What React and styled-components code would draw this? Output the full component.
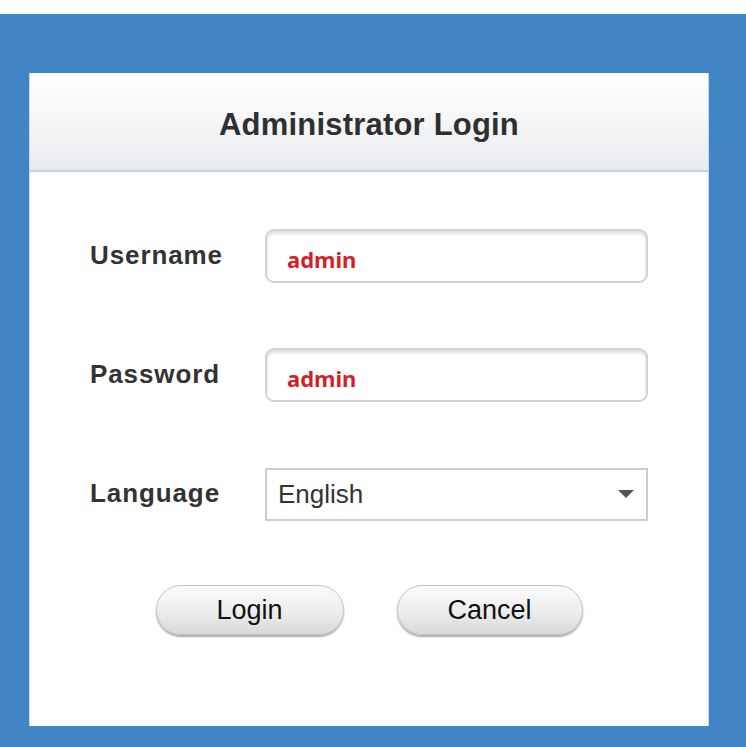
import React from "react";
import styled, { createGlobalStyle } from "styled-components";

const Global = createGlobalStyle`
  html, body { margin: 0; padding: 0; }
  body { background: #4185c5; font-family: "Liberation Sans", Arial, sans-serif; }
`;

const Page = styled.div`
  min-height: 747px;
  display: flex;
  flex-direction: column;
`;

const TopBand = styled.div`
  height: 14px;
  background: #fbfefd;
`;

const Stage = styled.div`
  flex: 1;
  background: #4185c5;
  padding: 59px 0 21px 29px;
`;

const Card = styled.div`
  width: 678px;
  height: 653px;
  background: #fff;
  border-left: 1px solid #c6d9ee;
  border-right: 1px solid #c6d9ee;
  display: flex;
  flex-direction: column;
`;

const Header = styled.div`
  box-sizing: border-box;
  height: 99px;
  padding-top: 6px;
  border-bottom: 2px solid #c9d0d6;
  background: linear-gradient(#ffffff 0%, #f6f7f8 45%, #e8ebee 100%);
  display: flex;
  align-items: center;
  justify-content: center;
`;

const Title = styled.h1`
  margin: 0;
  font-size: 31px;
  font-weight: bold;
  color: #2f2f2f;
  letter-spacing: 0.2px;
`;

const Form = styled.div`
  display: grid;
  grid-template-columns: 175px 383px;
  grid-auto-rows: 54px;
  row-gap: 65px;
  align-items: center;
  padding: 57px 0 0 60px;
`;

const Label = styled.label`
  font-size: 26px;
  font-weight: bold;
  color: #333;
  letter-spacing: 0.9px;
  margin-top: -2px;
`;

const TextBox = styled.div`
  box-sizing: border-box;
  height: 54px;
  border: 2px solid #d2d2d2;
  border-radius: 9px;
  box-shadow: inset 0 3px 3px rgba(0, 0, 0, 0.12);
  display: flex;
  align-items: center;
  padding: 6px 0 0 20px;
  font-family: "Noto Sans", "Open Sans", sans-serif;
  font-weight: bold;
  font-size: 22px;
  color: #d61f26;
`;

const Select = styled.div`
  box-sizing: border-box;
  height: 53px;
  border: 2px solid #cccccc;
  display: flex;
  align-items: center;
  justify-content: space-between;
  padding: 0 12px 0 11px;
  font-size: 26px;
  color: #333;
`;

const Caret = styled.span`
  width: 0;
  height: 0;
  border-left: 8px solid transparent;
  border-right: 8px solid transparent;
  border-top: 8px solid #555;
`;

const Buttons = styled.div`
  display: flex;
  justify-content: center;
  gap: 53px;
  margin-top: 64px;
`;

const Button = styled.button`
  box-sizing: border-box;
  width: ${(p) => p.$w}px;
  height: 50px;
  border-radius: 25px;
  border: 1px solid #c4c4c4;
  background: linear-gradient(#fbfbfb 0%, #eeeeee 50%, #d9d9d9 100%);
  box-shadow: 0 2px 2px rgba(0, 0, 0, 0.35);
  font-family: "Liberation Sans", Arial, sans-serif;
  font-size: 27px;
  color: #111;
  padding: 0;
`;

export default function App() {
  return (
    <Page>
      <Global />
      <TopBand />
      <Stage>
        <Card>
          <Header>
            <Title>Administrator Login</Title>
          </Header>
          <Form>
            <Label>Username</Label>
            <TextBox>admin</TextBox>
            <Label>Password</Label>
            <TextBox>admin</TextBox>
            <Label>Language</Label>
            <Select>
              English
              <Caret />
            </Select>
          </Form>
          <Buttons>
            <Button $w={188}>Login</Button>
            <Button $w={186}>Cancel</Button>
          </Buttons>
        </Card>
      </Stage>
    </Page>
  );
}
